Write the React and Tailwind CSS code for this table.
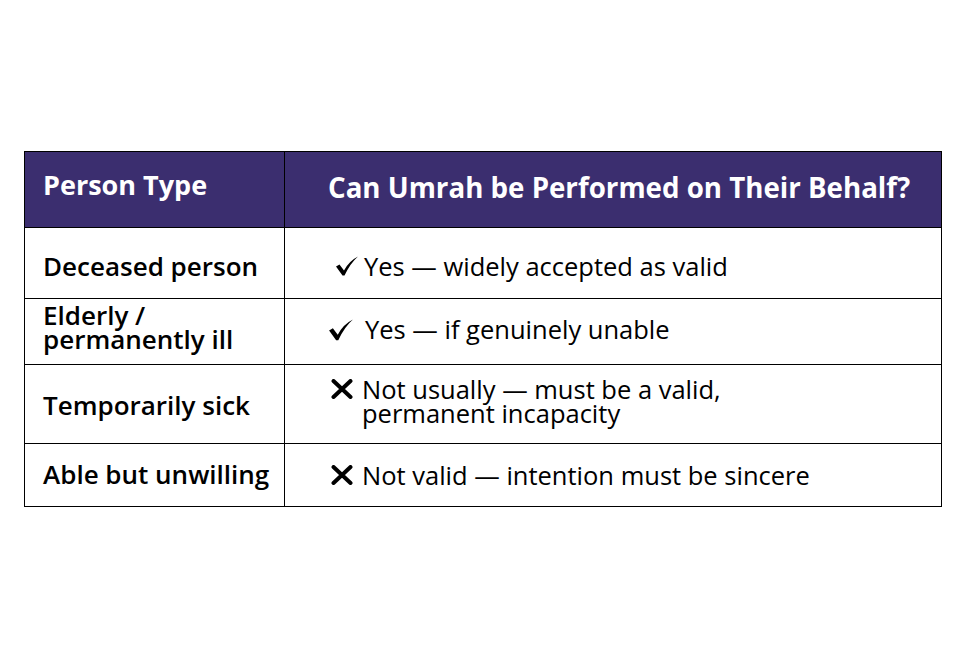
const rows = [
  { type: ['Deceased person'], mark: 'check', size: 24, text: ['Yes — widely accepted as valid'], pad: 'pl-[50px]', gap: 'gap-[5px]', left: 'pt-[6px]', right: 'pt-[5px]', h: 'h-[71px]' },
  { type: ['Elderly /', 'permanently ill'], mark: 'check', size: 26, text: ['Yes — if genuinely unable'], pad: 'pl-[43px]', gap: 'gap-[11px]', left: 'pb-[9px]', right: 'pb-[5px]', h: 'h-[66px]' },
  { type: ['Temporarily sick'], mark: 'cross', size: 24, text: ['Not usually — must be a valid,', 'permanent incapacity'], pad: 'pl-[45px]', gap: 'gap-[8px]', left: 'pt-[2px]', right: 'pb-[6px]', h: 'h-[79px]' },
  { type: ['Able but unwilling'], mark: 'cross', size: 24, text: ['Not valid — intention must be sincere'], pad: 'pl-[45px]', gap: 'gap-[8px]', left: 'pb-[3px]', right: 'pb-[1px]', h: 'h-[63px]' },
];

const Check = ({ size }) => (
  <svg width={size} height={size * 0.84} viewBox="0 0 24 20" className="shrink-0">
    <path d="M1 10.5 L4.5 8.5 L9 14.5 Q14 5 23 0.5 Q15.5 7 9.5 19.5 L7.5 19.5 Z" fill="#000" />
  </svg>
);

const Cross = () => (
  <svg width="24" height="20" viewBox="0 0 24 20" className="shrink-0">
    <path d="M3.5 2 L20.5 18 M20.5 2 L3.5 18" fill="none" stroke="#000" strokeWidth="4" strokeLinecap="round" />
  </svg>
);

export default function App() {
  return (
    <div className="w-[971px] h-[651px] bg-white pt-[151px] pl-[24px]" style={{ fontFamily: '"Open Sans", Lato, sans-serif' }}>
      <table className="w-[918px] border-collapse text-black">
        <thead>
          <tr className="h-[76px] bg-[#3b2e6f] text-white">
            <th className="w-[260px] border border-black text-left pl-[18px] pb-[8px] text-[27px] font-bold">
              Person Type
            </th>
            <th className="border border-black text-left pl-[43px] pb-[4px] text-[27.7px] font-bold">
              Can Umrah be Performed on Their Behalf?
            </th>
          </tr>
        </thead>
        <tbody>
          {rows.map((r, i) => (
            <tr key={i} className={r.h}>
              <td className={`border border-black pl-[18px] text-[26px] font-semibold leading-[24px] ${r.left}`}>
                {r.type.map((t) => (
                  <div key={t}>{t}</div>
                ))}
              </td>
              <td className={`border border-black ${r.pad} ${r.right} text-[25.5px] leading-[24px]`}>
                <div className={`flex items-start ${r.gap}`}>
                  <div className="pt-[2px]">{r.mark === 'check' ? <Check size={r.size} /> : <Cross />}</div>
                  <div>
                    {r.text.map((t) => (
                      <div key={t}>{t}</div>
                    ))}
                  </div>
                </div>
              </td>
            </tr>
          ))}
        </tbody>
      </table>
    </div>
  );
}
